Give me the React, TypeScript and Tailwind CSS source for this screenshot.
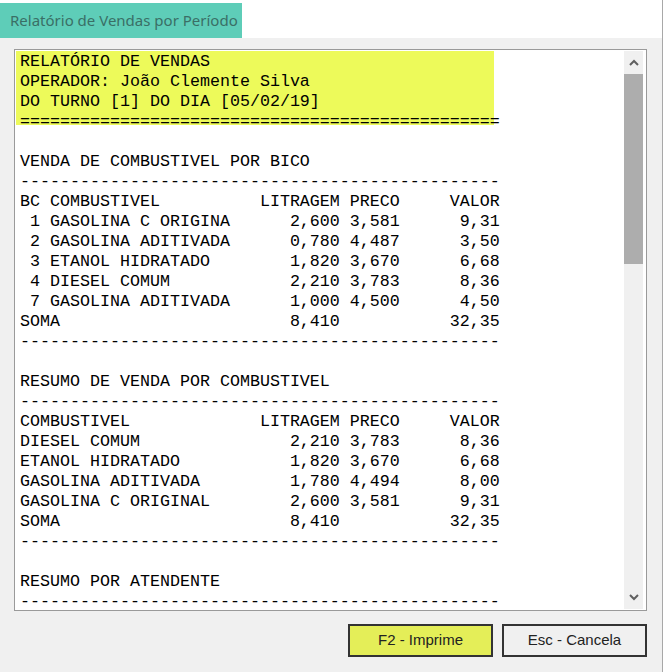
import React from "react";

const pad = (s: string, n: number) => s.padEnd(n);
const left = (s: string, n: number) => s.padStart(n);

function row(name: string, lit: string, preco: string, valor: string) {
  return pad(name, 24) + left(lit, 8) + " " + left(preco, 5) + left(valor, 10);
}

const EQ = "=".repeat(48);
const DASH = "-".repeat(48);

const header = [
  "RELATÓRIO DE VENDAS",
  "OPERADOR: João Clemente Silva",
  "DO TURNO [1] DO DIA [05/02/19]",
  EQ,
];

const body = [
  "",
  "VENDA DE COMBUSTIVEL POR BICO",
  DASH,
  row("BC COMBUSTIVEL", "LITRAGEM", "PRECO", "VALOR"),
  row(" 1 GASOLINA C ORIGINA", "2,600", "3,581", "9,31"),
  row(" 2 GASOLINA ADITIVADA", "0,780", "4,487", "3,50"),
  row(" 3 ETANOL HIDRATADO", "1,820", "3,670", "6,68"),
  row(" 4 DIESEL COMUM", "2,210", "3,783", "8,36"),
  row(" 7 GASOLINA ADITIVADA", "1,000", "4,500", "4,50"),
  row("SOMA", "8,410", "", "32,35"),
  DASH,
  "",
  "RESUMO DE VENDA POR COMBUSTIVEL",
  DASH,
  row("COMBUSTIVEL", "LITRAGEM", "PRECO", "VALOR"),
  row("DIESEL COMUM", "2,210", "3,783", "8,36"),
  row("ETANOL HIDRATADO", "1,820", "3,670", "6,68"),
  row("GASOLINA ADITIVADA", "1,780", "4,494", "8,00"),
  row("GASOLINA C ORIGINAL", "2,600", "3,581", "9,31"),
  row("SOMA", "8,410", "", "32,35"),
  DASH,
  "",
  "RESUMO POR ATENDENTE",
  DASH,
  "",
];

function Chevron({ up }: { up?: boolean }) {
  return (
    <svg width="10" height="7" viewBox="0 0 10 7">
      <polyline
        points={up ? "1,6 5,2 9,6" : "1,1 5,5 9,1"}
        fill="none"
        stroke="#606060"
        strokeWidth="2"
      />
    </svg>
  );
}

export default function App() {
  return (
    <div className="w-[663px] h-[672px] bg-[#f0f0f0] flex flex-col overflow-hidden font-['Liberation_Sans',sans-serif]">
      {/* Title bar */}
      <div className="h-[38px] bg-white flex border-r border-[#a8a8a8]">
        <div className="mt-[3px] w-[242px] bg-[#5ecdb8] flex items-center pl-[10px] text-[15px] text-[#3a6f66] font-['Noto_Sans',sans-serif]">
          Relatório de Vendas por Período
        </div>
      </div>

      <div className="flex-1 flex flex-col border-r border-[#a8a8a8] pl-[14px] pt-[11px]">
        {/* Memo */}
        <div className="w-[633px] h-[562px] border border-[#9a9a9a] bg-white p-px flex">
          <div className="w-[608px] overflow-hidden font-['Liberation_Mono',monospace] text-[16.67px] leading-[20px] text-black whitespace-pre">
            <div className="w-[478px] pl-[4px] pt-px bg-[linear-gradient(to_bottom,#edfa5a_74px,transparent_74px)]">
              {header.map((l, i) => (
                <div key={i} className="h-[20px]">{l}</div>
              ))}
            </div>
            <div className="pl-[4px]">
              {body.map((l, i) => (
                <div key={i} className="h-[20px]">{l}</div>
              ))}
            </div>
          </div>
          {/* Scrollbar */}
          <div className="w-[19px] bg-[#f0f0f0] flex flex-col">
            <div className="h-[23px] flex items-center justify-center">
              <Chevron up />
            </div>
            <div className="h-[190px] bg-[#adadad]" />
            <div className="flex-1" />
            <div className="h-[23px] flex items-center justify-center">
              <Chevron />
            </div>
          </div>
        </div>

        {/* Buttons */}
        <div className="mt-[13px] flex justify-end gap-[9px] pr-[15px]">
          <button className="w-[145px] h-[33px] bg-[#e4ee58] border-2 border-[#333] text-[15px] text-[#222]">
            F2 - Imprime
          </button>
          <button className="w-[145px] h-[33px] bg-[#f0f0f0] border-2 border-[#333] text-[15px] text-[#222]">
            Esc - Cancela
          </button>
        </div>
      </div>
    </div>
  );
}
